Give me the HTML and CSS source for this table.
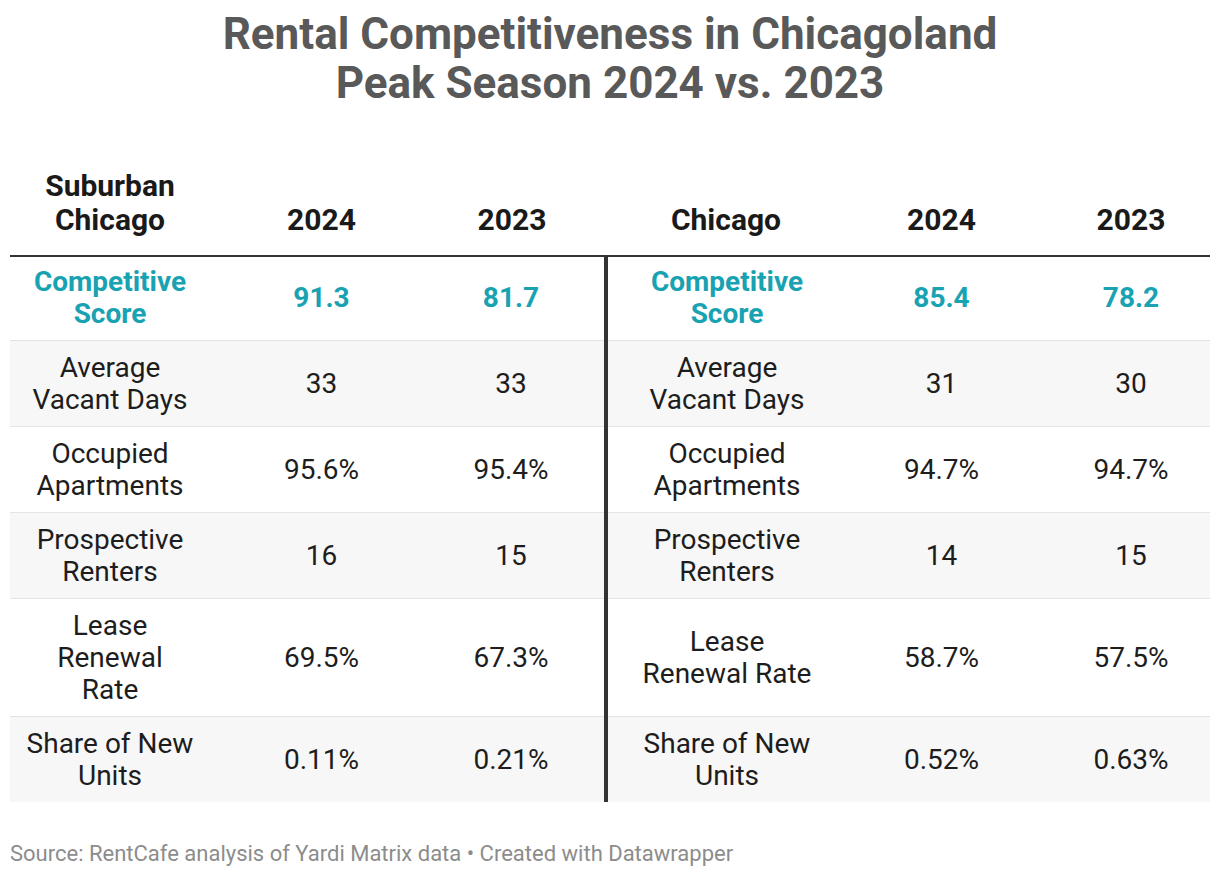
FILE: index.html
```html
<!DOCTYPE html>
<html lang="en">
<head>
<meta charset="utf-8">
<title>Rental Competitiveness in Chicagoland</title>
<link rel="stylesheet" href="styles.css">
</head>
<body>
<div class="chart">
  <h1 class="title">Rental Competitiveness in Chicagoland<br>Peak Season 2024 vs. 2023</h1>
  <table class="tbl">
    <colgroup>
      <col class="c1"><col class="c2"><col class="c3"><col class="c4"><col class="c5"><col class="c6">
    </colgroup>
    <thead>
      <tr>
        <th class="lbl">Suburban<br>Chicago</th>
        <th>2024</th>
        <th class="pre">2023</th>
        <th class="lbl post">Chicago</th>
        <th>2024</th>
        <th>2023</th>
      </tr>
    </thead>
    <tbody>
      <tr class="hl">
        <td>Competitive<br>Score</td><td>91.3</td><td class="pre">81.7</td>
        <td class="post">Competitive<br>Score</td><td>85.4</td><td>78.2</td>
      </tr>
      <tr class="alt">
        <td>Average<br>Vacant Days</td><td>33</td><td class="pre">33</td>
        <td class="post">Average<br>Vacant Days</td><td>31</td><td>30</td>
      </tr>
      <tr>
        <td>Occupied<br>Apartments</td><td>95.6%</td><td class="pre">95.4%</td>
        <td class="post">Occupied<br>Apartments</td><td>94.7%</td><td>94.7%</td>
      </tr>
      <tr class="alt">
        <td>Prospective<br>Renters</td><td>16</td><td class="pre">15</td>
        <td class="post">Prospective<br>Renters</td><td>14</td><td>15</td>
      </tr>
      <tr>
        <td>Lease<br>Renewal<br>Rate</td><td>69.5%</td><td class="pre">67.3%</td>
        <td class="post">Lease<br>Renewal Rate</td><td>58.7%</td><td>57.5%</td>
      </tr>
      <tr class="alt last">
        <td>Share of New<br>Units</td><td>0.11%</td><td class="pre">0.21%</td>
        <td class="post">Share of New<br>Units</td><td>0.52%</td><td>0.63%</td>
      </tr>
    </tbody>
  </table>
  <p class="source">Source: RentCafe analysis of Yardi Matrix data • Created with Datawrapper</p>
</div>
</body>
</html>
```

FILE: styles.css
```css
html, body {
  margin: 0;
  padding: 0;
  background: #ffffff;
}

body {
  font-family: Roboto, "Liberation Sans", Arial, sans-serif;
  color: #1d1d1d;
}

.chart {
  padding: 10px 10px 0 10px;
}

.title {
  margin: 0;
  text-align: center;
  font-size: 44px;
  line-height: 49px;
  font-weight: 700;
  color: #595959;
}

.tbl {
  margin-top: 61px;
  width: 1200px;
  border-collapse: collapse;
  table-layout: fixed;
}

.c1 { width: 200px; }
.c2 { width: 223px; }
.c3 { width: 173px; }
.c4 { width: 225px; }
.c5 { width: 221px; }
.c6 { width: 158px; }

.tbl th {
  font-size: 30px;
  line-height: 34px;
  font-weight: 700;
  color: #1a1a1a;
  text-align: center;
  vertical-align: bottom;
  padding: 0 0 18px 0;
  border-bottom: 2px solid #333333;
}

.tbl td {
  font-size: 28px;
  line-height: 32px;
  text-align: center;
  vertical-align: middle;
  padding: 11px 0 10px 0;
  border-bottom: 1px solid #e4e4e4;
  color: #1d1d1d;
}

.tbl tr.hl td {
  padding-top: 9px;
  color: #18a2b2;
  font-weight: 700;
}

.tbl .pre {
  padding-right: 15px;
}

.tbl .post {
  padding-left: 15px;
}

.tbl td.post {
  border-left: 4px solid #333333;
}

.tbl tr.alt td {
  background: #f7f7f7;
}

.tbl tr.last td {
  border-bottom: none;
}

.source {
  margin: 39px 0 0 0;
  font-size: 22px;
  line-height: 26px;
  color: #8c8c8c;
}
```
